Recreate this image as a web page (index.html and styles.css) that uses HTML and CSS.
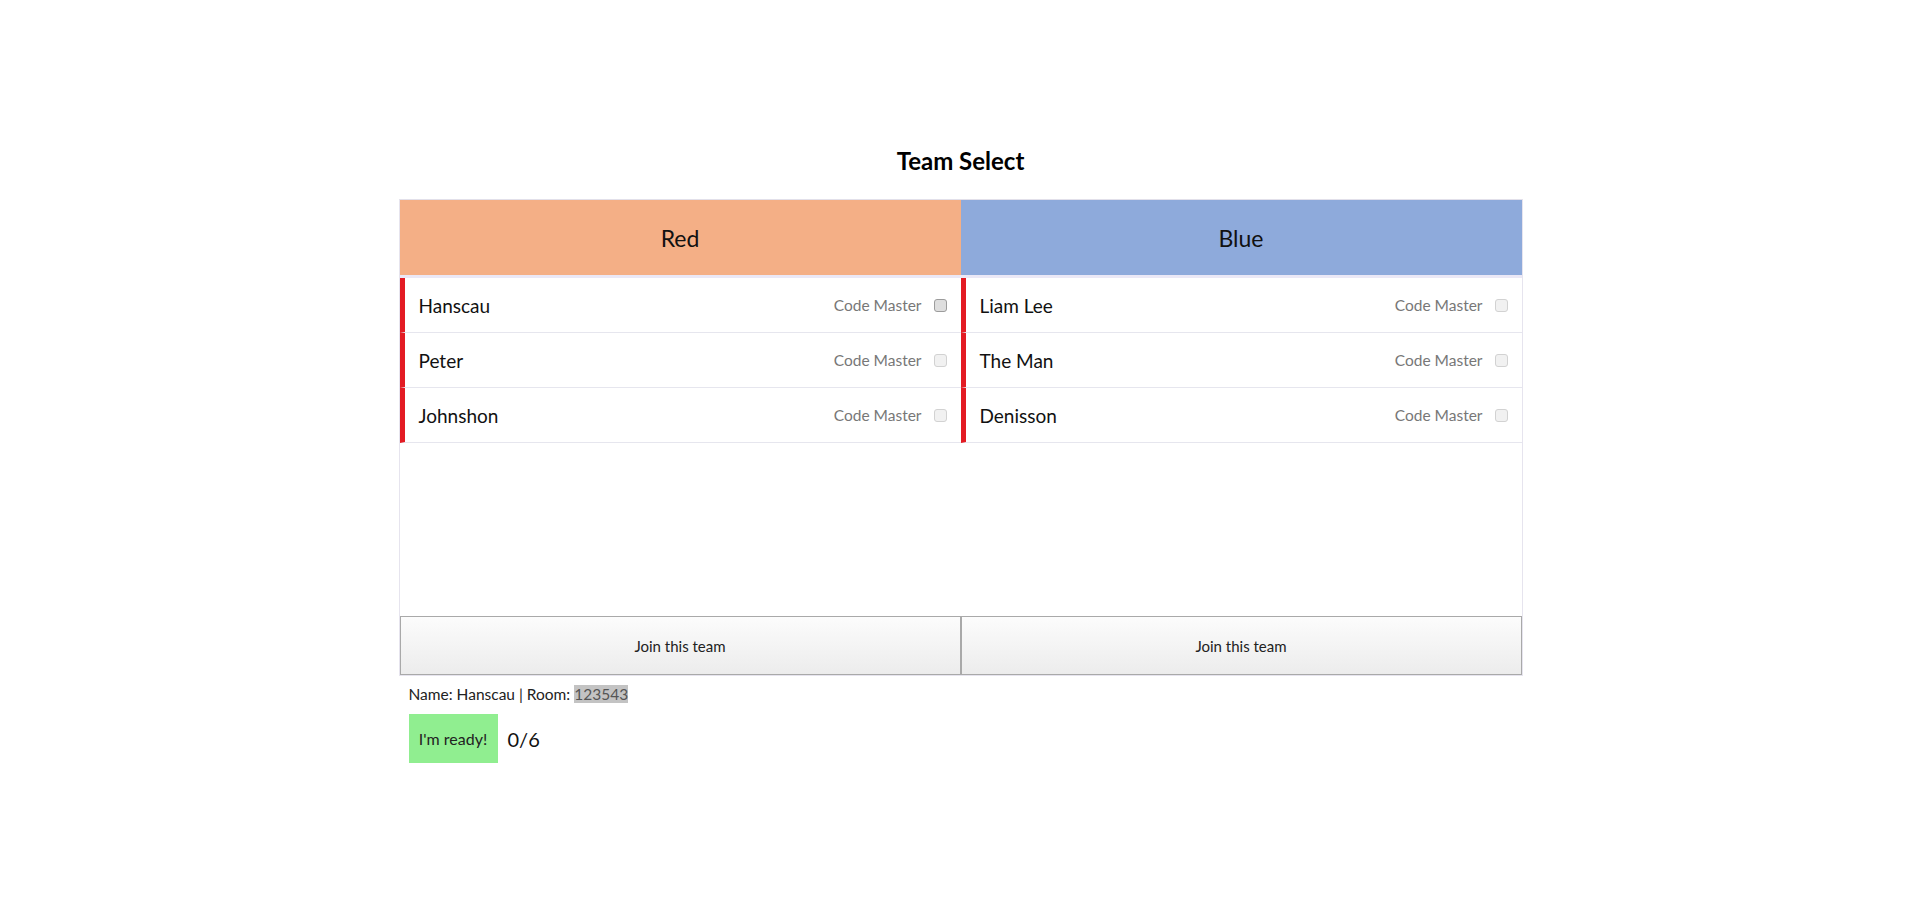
FILE: index.html
```html
<!DOCTYPE html>
<html lang="en">
<head>
  <meta charset="UTF-8" />
  <title>Team Select</title>
  <link rel="stylesheet" href="styles.css">
</head>
<body>
  <div class="lobby">
    <h3 class="title">Team Select</h3>

    <div class="teams">
      <div class="team">
        <div class="team-head red">Red</div>
        <ul class="players">
          <li class="player">
            <span class="player-name">Hanscau</span>
            <label class="master">Code Master <input type="checkbox" /></label>
          </li>
          <li class="player">
            <span class="player-name">Peter</span>
            <label class="master">Code Master <input type="checkbox" disabled /></label>
          </li>
          <li class="player">
            <span class="player-name">Johnshon</span>
            <label class="master">Code Master <input type="checkbox" disabled /></label>
          </li>
        </ul>
        <button class="join">Join this team</button>
      </div>

      <div class="team">
        <div class="team-head blue">Blue</div>
        <ul class="players">
          <li class="player">
            <span class="player-name">Liam Lee</span>
            <label class="master">Code Master <input type="checkbox" disabled /></label>
          </li>
          <li class="player">
            <span class="player-name">The Man</span>
            <label class="master">Code Master <input type="checkbox" disabled /></label>
          </li>
          <li class="player">
            <span class="player-name">Denisson</span>
            <label class="master">Code Master <input type="checkbox" disabled /></label>
          </li>
        </ul>
        <button class="join">Join this team</button>
      </div>
    </div>

    <p class="info">Name: Hanscau | Room: <span class="room">123543</span></p>

    <div class="ready-row">
      <button class="ready">I'm ready!</button>
      <span class="count">0/6</span>
    </div>
  </div>
</body>
</html>
```

FILE: styles.css
```css
/* Base */
* {
  box-sizing: border-box;
}

body {
  margin: 0;
  padding-left: 4px;
  font-family: 'Lato', 'Noto Sans', sans-serif;
  color: #111;
  background: #fff;
}

.lobby {
  width: 1124px;
  margin: 0 auto;
  padding-top: 146px;
}

.title {
  margin: 0 0 24px;
  font-size: 24px;
  line-height: 29px;
  font-weight: 700;
  text-align: center;
  color: #000;
}

/* Teams panel */
.teams {
  display: grid;
  grid-template-columns: 1fr 1fr;
  border: 1px solid #e6e4ee;
  border-top-color: #e2e0ea;
}

.team {
  display: flex;
  flex-direction: column;
}

.team-head {
  height: 75px;
  display: flex;
  align-items: center;
  justify-content: center;
  font-size: 23px;
  color: #111;
}

.team-head.red {
  background: #f4af86;
}

.team-head.blue {
  background: #8eaadb;
}

.players {
  list-style: none;
  margin: 0;
  padding: 0;
  height: 341px;
  border-top: 3px solid #ebe8f6;
}

.player {
  height: 55px;
  display: flex;
  align-items: center;
  justify-content: space-between;
  padding: 0 14px 0 14px;
  border-left: 5px solid #e31b23;
  border-bottom: 1px solid #e6e6ee;
}

.player-name {
  font-size: 19px;
}

.master {
  display: flex;
  align-items: center;
  gap: 12px;
  font-size: 15.5px;
  color: #777;
}

.master input {
  appearance: none;
  -webkit-appearance: none;
  width: 13px;
  height: 13px;
  margin: 0;
  border: 1px solid #9c9c9c;
  border-radius: 3px;
  background: #dedede;
}

.master input:disabled {
  border-color: #d2d2d2;
  background: #f1f1f1;
}

/* Buttons */
.join {
  height: 59px;
  width: 100%;
  font-family: inherit;
  font-size: 15px;
  color: #222;
  border: 1px solid #a9a9a9;
  background: linear-gradient(#fcfcfc, #ececec);
  cursor: pointer;
}

.info {
  margin: 8px 0 0 10px;
  font-size: 15.5px;
  line-height: 20px;
  color: #222;
}

.room {
  background: #c3c3c3;
  color: #555;
}

.ready-row {
  display: flex;
  align-items: center;
  gap: 10px;
  margin: 10px 0 0 10px;
}

.ready {
  width: 89px;
  height: 49px;
  font-family: inherit;
  font-size: 16px;
  color: #222;
  border: none;
  background: #90ee90;
  cursor: pointer;
}

.count {
  font-size: 20px;
}
```
